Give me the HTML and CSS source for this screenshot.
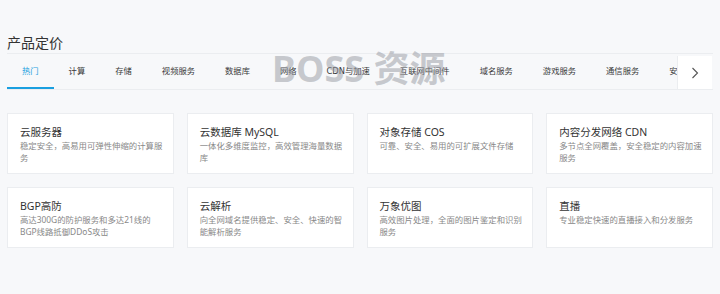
FILE: index.html
```html
<!DOCTYPE html>
<html lang="zh-CN">
<head>
  <meta charset="UTF-8">
  <meta name="viewport" content="width=device-width, initial-scale=1.0">
  <title>产品定价</title>
  <link rel="stylesheet" href="styles.css">
</head>
<body>
  <div class="page">
    <h2 class="page-title">产品定价</h2>

    <div class="tabs">
      <div class="tab-list">
        <span class="tab active">热门</span>
        <span class="tab">计算</span>
        <span class="tab">存储</span>
        <span class="tab">视频服务</span>
        <span class="tab">数据库</span>
        <span class="tab">网络</span>
        <span class="tab">CDN与加速</span>
        <span class="tab">互联网中间件</span>
        <span class="tab">域名服务</span>
        <span class="tab">游戏服务</span>
        <span class="tab">通信服务</span>
        <span class="tab">安全</span>
      </div>
      <button class="tab-next" aria-label="下一页">
        <svg width="8" height="12" viewBox="0 0 8 12"><path d="M1.5 1 L6.5 6 L1.5 11" fill="none" stroke="#555" stroke-width="1.1"/></svg>
      </button>
    </div>

    <div class="cards">
      <div class="card">
        <div class="card-title">云服务器</div>
        <div class="card-desc">稳定安全，高易用可弹性伸缩的计算服务</div>
      </div>
      <div class="card">
        <div class="card-title">云数据库 MySQL</div>
        <div class="card-desc">一体化多维度监控，高效管理海量数据库</div>
      </div>
      <div class="card">
        <div class="card-title">对象存储 COS</div>
        <div class="card-desc">可靠、安全、易用的可扩展文件存储</div>
      </div>
      <div class="card">
        <div class="card-title">内容分发网络 CDN</div>
        <div class="card-desc">多节点全网覆盖，安全稳定的内容加速服务</div>
      </div>
      <div class="card">
        <div class="card-title">BGP高防</div>
        <div class="card-desc">高达300G的防护服务和多达21线的BGP线路抵御DDoS攻击</div>
      </div>
      <div class="card">
        <div class="card-title">云解析</div>
        <div class="card-desc">向全网域名提供稳定、安全、快速的智能解析服务</div>
      </div>
      <div class="card">
        <div class="card-title">万象优图</div>
        <div class="card-desc">高效图片处理，全面的图片鉴定和识别服务</div>
      </div>
      <div class="card">
        <div class="card-title">直播</div>
        <div class="card-desc">专业稳定快速的直播接入和分发服务</div>
      </div>
    </div>

    <div class="watermark">BOSS 资源</div>
  </div>
</body>
</html>
```

FILE: styles.css
```css
body {
  margin: 0;
  background-color: #f7f8fa;
  font-family: "Noto Sans", "Noto Sans CJK SC", sans-serif;
  color: #333;
}
.page {
  position: relative;
  padding: 33px 7px 0;
}
.page-title {
  margin: 0;
  font-size: 14px;
  font-weight: normal;
  line-height: 20px;
  color: #333;
}
.tabs {
  position: relative;
  border-top: 1px solid #ebedf0;
  border-bottom: 1px solid #ebedf0;
  height: 35px;
  overflow: hidden;
}
.tab-list {
  display: flex;
  white-space: nowrap;
}
.tab {
  flex: none;
  padding: 0 15px;
  height: 33px;
  line-height: 35px;
  font-family: "DejaVu Sans", "Noto Sans CJK SC", sans-serif;
  font-size: 8.3px;
  color: #3a3a3a;
  border-bottom: 2px solid transparent;
}
.tab.active {
  color: #1a9fe0;
  border-bottom-color: #1a9fe0;
}
.tab-next {
  position: absolute;
  top: 2px;
  right: 1px;
  width: 35px;
  height: 33px;
  padding: 0;
  border: 0;
  border-left: 1px solid #ebedf0;
  background: #fff;
  display: flex;
  align-items: center;
  justify-content: center;
}
.cards {
  margin-top: 23px;
  display: grid;
  grid-template-columns: repeat(4, 1fr);
  gap: 13px;
}
.card {
  background: #fff;
  border: 1px solid #ebedf0;
  padding: 10px 9px 9px 12px;
}
.card-title {
  font-size: 10.5px;
  line-height: 16px;
  color: #333;
}
.card-desc {
  font-size: 8.4px;
  line-height: 12px;
  color: #888;
}
.watermark {
  position: absolute;
  left: 272px;
  top: 40px;
  font-size: 36px;
  font-weight: bold;
  color: rgba(150, 152, 160, 0.5);
  pointer-events: none;
  white-space: nowrap;
}
```
